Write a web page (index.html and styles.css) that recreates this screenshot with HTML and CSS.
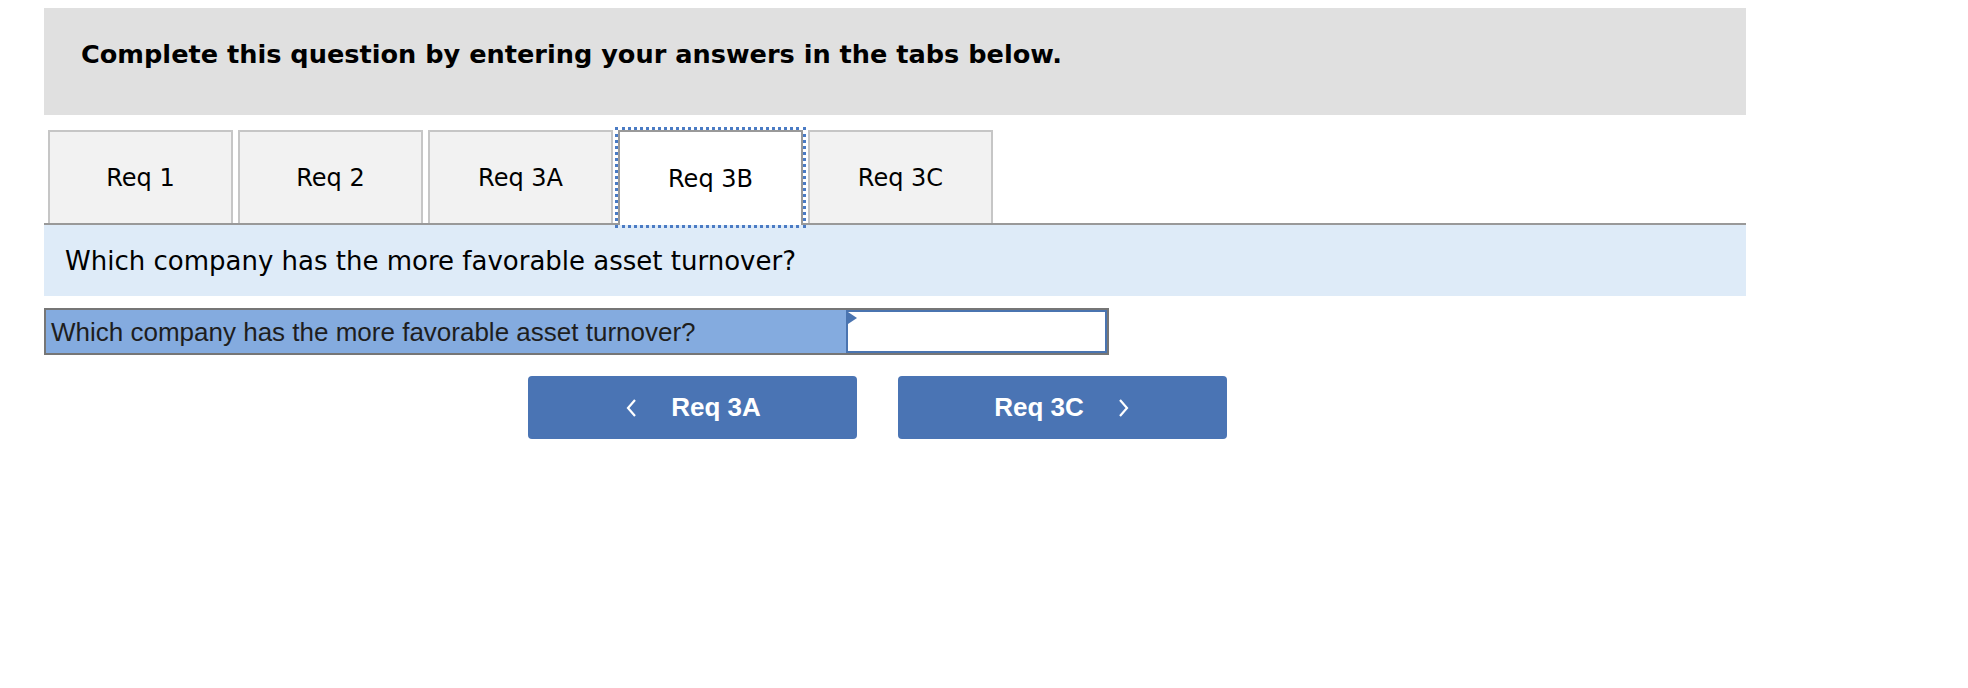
FILE: index.html
```html
<html lang="en">
<head>
  <meta charset="UTF-8">
  <meta name="viewport" content="width=device-width, initial-scale=1.0">
  <title>Req 3B</title>
  <link rel="stylesheet" href="styles.css">
</head>
<body>
  <div class="container">
    <div class="instructions">
      <h1>Complete this question by entering your answers in the tabs below.</h1>
    </div>
    <div class="tabs">
      <button class="tab">Req 1</button>
      <button class="tab">Req 2</button>
      <button class="tab">Req 3A</button>
      <button class="tab active">Req 3B</button>
      <button class="tab">Req 3C</button>
    </div>
    <div class="question">
      <p>Which company has the more favorable asset turnover?</p>
    </div>
    <div class="answer-row">
      <div class="answer-label">Which company has the more favorable asset turnover?</div>
      <div class="answer-input"><input type="text" aria-label="Answer"></div>
    </div>
    <div class="nav-buttons">
      <button class="nav-btn">
        <svg width="14" height="22" viewBox="0 0 14 22"><polyline points="11,3 4,11 11,19" fill="none" stroke="#fff" stroke-width="2.2"/></svg>
        <span>Req 3A</span>
      </button>
      <button class="nav-btn">
        <span>Req 3C</span>
        <svg width="14" height="22" viewBox="0 0 14 22"><polyline points="3,3 10,11 3,19" fill="none" stroke="#fff" stroke-width="2.2"/></svg>
      </button>
    </div>
  </div>
</body>
</html>
```

FILE: styles.css
```css
body {
  margin: 0;
  padding: 0;
  background-color: #fff;
  font-family: "DejaVu Sans", Verdana, sans-serif;
  color: #000;
}

.container {
  width: 1702px;
  padding: 8px 0 0 44px;
}

.instructions {
  background-color: #e0e0e0;
  height: 107px;
  padding: 31px 0 0 37px;
  box-sizing: border-box;
}

.instructions h1 {
  margin: 0;
  font-size: 25.6px;
  line-height: 30px;
  font-weight: bold;
}

.tabs {
  display: flex;
  gap: 5px;
  margin-top: 15px;
  padding-left: 4px;
  border-bottom: 2px solid #999;
}

.tab {
  width: 185px;
  height: 93px;
  background-color: #f2f2f2;
  border: 2px solid #c6c6c6;
  border-bottom: none;
  font-family: "DejaVu Sans", Verdana, sans-serif;
  font-size: 24px;
  color: #000;
  padding: 0;
  cursor: pointer;
}

.tab.active {
  background-color: #fff;
  border-color: #999;
  height: 95px;
  margin-bottom: -2px;
  outline: 3px dotted #4a7bc4;
  outline-offset: 0;
}

.question {
  background-color: #deebf8;
  height: 71px;
  display: flex;
  align-items: center;
  padding-left: 21px;
}

.question p {
  margin: 0;
  font-size: 26px;
}

.answer-row {
  display: flex;
  width: 1065px;
  height: 47px;
  margin-top: 12px;
  border: 2px solid #767676;
  box-sizing: border-box;
}

.answer-label {
  width: 800px;
  background-color: #84abdf;
  font-family: "Liberation Sans", Arial, sans-serif;
  font-size: 26px;
  color: #1e1e1e;
  display: flex;
  align-items: center;
  padding: 2px 0 0 5px;
  box-sizing: border-box;
}

.answer-input {
  flex: 1;
  position: relative;
  border: 2px solid #4a74b0;
  background-color: #fff;
}

.answer-input::before {
  content: "";
  position: absolute;
  left: 0;
  top: 0;
  border-left: 9px solid #4a74b0;
  border-top: 6px solid transparent;
  border-bottom: 6px solid transparent;
}

.answer-input input {
  width: 100%;
  height: 100%;
  border: none;
  outline: none;
  padding: 0 8px;
  box-sizing: border-box;
  font-size: 20px;
}

.nav-buttons {
  display: flex;
  gap: 41px;
  margin: 21px 0 0 484px;
}

.nav-btn {
  width: 329px;
  height: 63px;
  background-color: #4a74b4;
  border: none;
  border-radius: 4px;
  color: #fff;
  font-family: "Liberation Sans", Arial, sans-serif;
  font-size: 26px;
  font-weight: bold;
  display: flex;
  justify-content: center;
  align-items: center;
  gap: 33px;
  cursor: pointer;
}
```
